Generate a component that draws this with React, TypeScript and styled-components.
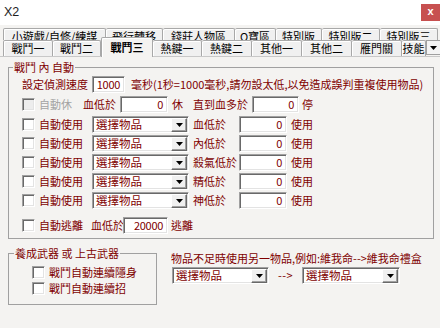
import styled, { createGlobalStyle } from 'styled-components'

const GlobalStyle = createGlobalStyle`
  html, body {
    margin: 0;
    padding: 0;
    background: #f4f3f1;
  }
  body {
    font-family: "Noto Sans CJK TC", "Noto Sans", sans-serif;
  }
`

const backTabs = [
  { label: '小遊戲/自修/練謀', w: 103 },
  { label: '飛行轉移', w: 57 },
  { label: '錢莊人物區', w: 72 },
  { label: 'O寶區', w: 41 },
  { label: '特別版', w: 46 },
  { label: '特別版二', w: 58 },
  { label: '特別版三', w: 58 },
]

const frontTabs = [
  { label: '戰鬥一', w: 50 },
  { label: '戰鬥二', w: 48 },
  { label: '戰鬥三', w: 52, active: true },
  { label: '熱鍵一', w: 49 },
  { label: '熱鍵二', w: 50 },
  { label: '其他一', w: 50 },
  { label: '其他二', w: 50 },
  { label: '雁門關', w: 50 },
  { label: '技能', w: 24 },
]

const useRows = ['血低於', '內低於', '殺氣低於', '精低於', '神低於']

const DropArrow = () => (
  <svg width="7" height="4" viewBox="0 0 7 4">
    <polygon points="0,0 7,0 3.5,4" fill="#000" />
  </svg>
)

const ComboBox = ({ w }: { w: number }) => (
  <Select $w={w}>
    <span>選擇物品</span>
    <DropBtn>
      <DropArrow />
    </DropBtn>
  </Select>
)

export default function App() {
  return (
    <>
      <GlobalStyle />
      <Window>
        <TitleBar>
          <Title>X2</Title>
          <CloseBtn>x</CloseBtn>
        </TitleBar>

        <TabStrip>
          <BackRow>
            {backTabs.map((t, i) => (
              <BackTab key={t.label} $w={t.w} $first={i === 0}>
                {t.label}
              </BackTab>
            ))}
          </BackRow>
          <FrontRow>
            {frontTabs.map((t, i) => (
              <FrontTab key={t.label} $w={t.w} $active={!!t.active} $first={i === 0}>
                {t.label}
              </FrontTab>
            ))}
            <ScrollBtn>
              <DropArrow />
            </ScrollBtn>
          </FrontRow>
        </TabStrip>

        <Panel>
          <Group $w={426} $mt={4}>
            <Legend $ml={4}>戰鬥 內 自動</Legend>
            <GroupBody $pl={13} $pt={2} $pb={5}>
              <Row $h={17}>
                <Label $w={70}>設定偵測速度</Label>
                <Field $w={33}>1000</Field>
                <Label $ml={6}>毫秒(1秒=1000毫秒,請勿設太低,以免造成誤判重複使用物品)</Label>
              </Row>

              <Row $h={16} $mt={3}>
                <Check $disabled />
                <Label $w={44} $ml={4} $muted>
                  自動休
                </Label>
                <Label $w={37}>血低於</Label>
                <Field $w={48}>0</Field>
                <Label $w={21} $ml={4}>
                  休
                </Label>
                <Label $w={59}>直到血多於</Label>
                <Field $w={47}>0</Field>
                <Label $ml={3}>停</Label>
              </Row>

              <UseList>
                {useRows.map((label) => (
                  <Row key={label} $h={19}>
                    <Check />
                    <Label $w={53} $ml={4}>
                      自動使用
                    </Label>
                    <ComboBox w={97} />
                    <Label $w={46} $ml={4}>
                      {label}
                    </Label>
                    <Field $w={48}>0</Field>
                    <Label $ml={4}>使用</Label>
                  </Row>
                ))}
              </UseList>

              <Row $h={16} $mt={7}>
                <Check />
                <Label $w={52} $ml={4}>
                  自動逃離
                </Label>
                <Label $w={32}>血低於</Label>
                <Field $w={45}>20000</Field>
                <Label $ml={3}>逃離</Label>
              </Row>
            </GroupBody>
          </Group>

          <Bottom>
            <Group $w={149} $mt={0}>
              <Legend $ml={5}>養成武器 或 上古武器</Legend>
              <GroupBody $pl={23} $pt={4} $pb={8}>
                <Row $h={16}>
                  <Check />
                  <Label $ml={4}>戰鬥自動連續隱身</Label>
                </Row>
                <Row $h={16}>
                  <Check />
                  <Label $ml={4}>戰鬥自動連續招</Label>
                </Row>
              </GroupBody>
            </Group>

            <SwapColumn>
              <Label>{'物品不足時使用另一物品,例如:維我命-->維我命禮盒'}</Label>
              <Row $h={17} $mt={2}>
                <Spacer />
                <ComboBox w={97} />
                <ArrowText>{'-->'}</ArrowText>
                <ComboBox w={98} />
              </Row>
            </SwapColumn>
          </Bottom>
        </Panel>
      </Window>
    </>
  )
}

const Window = styled.div`
  width: 440px;
  height: 328px;
  overflow: hidden;
  background: #f4f3f1;
  color: #800000;
  font-size: 11px;
  line-height: 13px;
  display: flex;
  flex-direction: column;
`

const TitleBar = styled.div`
  height: 25px;
  flex: none;
  background: #fff;
  display: flex;
  align-items: center;
  justify-content: space-between;
  padding-left: 4px;
`

const Title = styled.span`
  font-family: "Liberation Sans", Arial, sans-serif;
  font-size: 12.5px;
  color: #1e1e1e;
`

const CloseBtn = styled.div`
  width: 19px;
  height: 17px;
  background: #c75050;
  color: #fff;
  font-family: "Liberation Sans", Arial, sans-serif;
  font-weight: bold;
  font-size: 11px;
  line-height: 15px;
  text-align: center;
`

const TabStrip = styled.div`
  padding: 3px 0 0 3px;
  flex: none;
  color: #000;
`

const BackRow = styled.div`
  display: flex;
  height: 12px;
  overflow: hidden;
`

const BackTab = styled.div<{ $w: number; $first: boolean }>`
  flex: none;
  width: ${({ $w }) => $w}px;
  height: 16px;
  box-sizing: border-box;
  padding-top: 1px;
  background: #f0f0f0;
  border-top: 1px solid #a8a8a8;
  border-right: 1px solid #a8a8a8;
  border-left: ${({ $first }) => ($first ? '1px solid #a8a8a8' : 'none')};
  border-radius: 2px 2px 0 0;
  box-shadow: inset 1px 1px 0 #fff;
  text-align: center;
  white-space: nowrap;
  overflow: hidden;
`

const FrontRow = styled.div`
  display: flex;
  align-items: flex-end;
  height: 16px;
  position: relative;
  z-index: 1;
`

const FrontTab = styled.div<{ $w: number; $active: boolean; $first: boolean }>`
  flex: none;
  width: ${({ $w }) => $w}px;
  height: ${({ $active }) => ($active ? 20 : 16)}px;
  margin-bottom: ${({ $active }) => ($active ? -1 : 0)}px;
  box-sizing: border-box;
  padding-top: ${({ $active }) => ($active ? 3 : 1)}px;
  background: ${({ $active }) => ($active ? '#f4f3f1' : '#f0f0f0')};
  border-top: 1px solid #a8a8a8;
  border-right: 1px solid #a8a8a8;
  border-left: ${({ $first, $active }) => ($first || $active ? '1px solid #a8a8a8' : 'none')};
  border-radius: 2px 2px 0 0;
  box-shadow: inset 1px 1px 0 #fff;
  font-weight: ${({ $active }) => ($active ? 'bold' : 'normal')};
  text-align: center;
  white-space: nowrap;
  overflow: hidden;
`

const ScrollBtn = styled.div`
  flex: none;
  width: 16px;
  height: 15px;
  margin-bottom: 1px;
  box-sizing: border-box;
  background: #f4f4f4;
  border: 1px solid #a0a0a0;
  display: flex;
  align-items: center;
  justify-content: center;
  padding-right: 2px;
`

const Panel = styled.div`
  flex: 1;
  border-top: 1px solid #c8c8c8;
  padding-left: 8px;
`

const Group = styled.fieldset<{ $w: number; $mt: number }>`
  width: ${({ $w }) => $w}px;
  box-sizing: border-box;
  margin: ${({ $mt }) => $mt}px 0 0 0;
  padding: 0;
  border: 1px solid #a0a0a0;
  min-inline-size: 0;
  flex: none;
`

const Legend = styled.legend<{ $ml: number }>`
  margin-left: ${({ $ml }) => $ml}px;
  padding: 0 1px;
  font-size: 11px;
  line-height: 13px;
  white-space: nowrap;
`

const GroupBody = styled.div<{ $pl: number; $pt: number; $pb: number }>`
  padding: ${({ $pt }) => $pt}px 0 ${({ $pb }) => $pb}px ${({ $pl }) => $pl}px;
  display: flex;
  flex-direction: column;
`

const Row = styled.div<{ $h: number; $mt?: number }>`
  display: flex;
  align-items: center;
  height: ${({ $h }) => $h}px;
  margin-top: ${({ $mt }) => $mt ?? 0}px;
`

const UseList = styled.div`
  display: flex;
  flex-direction: column;
  margin-top: 3px;
`

const Label = styled.span<{ $w?: number; $ml?: number; $muted?: boolean }>`
  flex: none;
  width: ${({ $w }) => ($w ? `${$w}px` : 'auto')};
  margin-left: ${({ $ml }) => $ml ?? 0}px;
  color: ${({ $muted }) => ($muted ? '#a3a3a3' : '#800000')};
  white-space: nowrap;
`

const sunken = `
  background: #fff;
  border: 1px solid;
  border-color: #a0a0a0 #fff #fff #a0a0a0;
  box-shadow: inset 1px 1px 0 #696969, inset -1px -1px 0 #e3e3e3;
  box-sizing: border-box;
`

const Field = styled.div<{ $w: number }>`
  ${sunken}
  flex: none;
  width: ${({ $w }) => $w}px;
  height: 17px;
  padding: 1px 4px 0 0;
  text-align: right;
  letter-spacing: -0.3px;
`

const Check = styled.div<{ $disabled?: boolean }>`
  ${sunken}
  flex: none;
  width: 13px;
  height: 13px;
  background: ${({ $disabled }) => ($disabled ? '#ededed' : '#fff')};
`

const Select = styled.div<{ $w: number }>`
  ${sunken}
  flex: none;
  width: ${({ $w }) => $w}px;
  height: 17px;
  display: flex;
  align-items: center;
  justify-content: space-between;
  padding: 0 1px 0 3px;
  font-size: 11.5px;
`

const DropBtn = styled.div`
  width: 16px;
  height: 14px;
  box-sizing: border-box;
  background: #f0f0f0;
  border: 1px solid;
  border-color: #fff #696969 #696969 #fff;
  box-shadow: inset -1px -1px 0 #a0a0a0;
  display: flex;
  align-items: center;
  justify-content: center;
`

const Bottom = styled.div`
  display: flex;
  align-items: flex-start;
  margin-top: 8px;
`

const SwapColumn = styled.div`
  display: flex;
  flex-direction: column;
  margin-left: 14px;
  padding-top: 5px;
`

const Spacer = styled.span`
  width: 1px;
  flex: none;
`

const ArrowText = styled.span`
  flex: none;
  width: 33px;
  text-align: center;
  letter-spacing: 0.5px;
`
